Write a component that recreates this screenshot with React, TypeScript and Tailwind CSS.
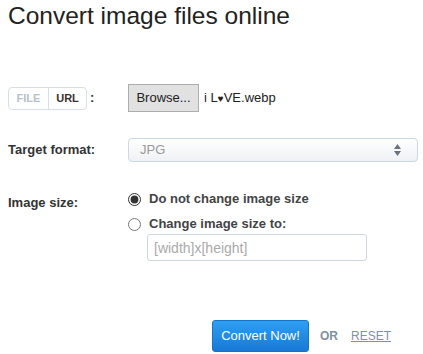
import { useState } from 'react';

type Mode = 'file' | 'url';

function App() {
  const [mode, setMode] = useState<Mode>('file');
  const [resize, setResize] = useState(false);

  return (
    <div className="min-h-screen bg-white pl-2 pr-[4px] font-['Liberation_Sans',Arial,sans-serif] text-[#333]">
      {/* Heading */}
      <h1 className="pt-[1px] text-[24.5px] leading-[30px] text-[#222]">Convert image files online</h1>

      {/* Source row */}
      <div className="mt-[53px] flex items-center">
        <div className="flex w-[120px] shrink-0 items-center">
          <div className="flex h-[23px] items-stretch rounded-[4px] border border-[#d6dee7] text-[11px] font-bold">
            <button
              onClick={() => setMode('file')}
              className={`w-[39px] ${mode === 'file' ? 'text-[#b7bfcc]' : 'text-[#333]'}`}
            >
              FILE
            </button>
            <button
              onClick={() => setMode('url')}
              className="w-[38px] border-l border-[#d6dee7] text-[#333]"
            >
              URL
            </button>
          </div>
          <span className="ml-[3px] text-[13px] font-bold">:</span>
        </div>
        <button className="h-[28px] w-[71px] border border-[#adadad] bg-[#e1e1e1] text-[13px] text-[#222]">
          Browse...
        </button>
        <span className="ml-[5px] text-[13px] text-[#222]">
          i L<span className="text-[10px]">♥</span>VE.webp
        </span>
      </div>

      {/* Target format */}
      <div className="mt-[26px] flex items-center">
        <label className="w-[120px] shrink-0 text-[13px] font-bold">Target format:</label>
        <div className="flex h-[24px] w-[290px] items-center justify-between rounded-[4px] border border-[#cbd8e4] bg-gradient-to-b from-white to-[#eff1f4] pl-[11px] pr-[16px]">
          <span className="text-[13px] text-[#999]">JPG</span>
          <svg width="7" height="12" viewBox="0 0 7 12" className="fill-[#6a7280]">
            <path d="M3.5 0 L7 5 L0 5 Z" />
            <path d="M0 7 L7 7 L3.5 12 Z" />
          </svg>
        </div>
      </div>

      {/* Image size */}
      <div className="mt-[29px] flex">
        <label className="w-[120px] shrink-0 pt-[2px] text-[13px] font-bold">Image size:</label>
        <div className="flex flex-col">
          <label className="flex h-[16px] items-center gap-[8px] text-[13px] font-bold text-[#444]">
            <input
              type="radio"
              checked={!resize}
              onChange={() => setResize(false)}
              className="m-0 h-[13px] w-[13px] accent-[#333]"
            />
            Do not change image size
          </label>
          <label className="mt-[9px] flex h-[16px] items-center gap-[8px] text-[13px] font-bold text-[#444]">
            <input
              type="radio"
              checked={resize}
              onChange={() => setResize(true)}
              className="m-0 h-[13px] w-[13px] accent-[#333]"
            />
            Change image size to:
          </label>
          <input
            placeholder="[width]x[height]"
            className="ml-[19px] mt-[2px] h-[27px] w-[220px] rounded-[3px] border border-[#cfd6de] px-[6px] text-[14px] placeholder:text-[#aaa]"
          />
        </div>
      </div>

      {/* Actions */}
      <div className="mt-[59px] flex items-center pl-[204px]">
        <button className="h-[32px] w-[97px] rounded-[3px] border border-[#1674c8] bg-gradient-to-b from-[#2e9ff2] to-[#1879d6] text-[13px] text-white">
          Convert Now!
        </button>
        <span className="ml-[11px] text-[12px] font-bold text-[#8090a3]">OR</span>
        <a href="#" className="ml-[13px] text-[12px] text-[#7d8fb3] underline">
          RESET
        </a>
      </div>
    </div>
  );
}

export default App;
